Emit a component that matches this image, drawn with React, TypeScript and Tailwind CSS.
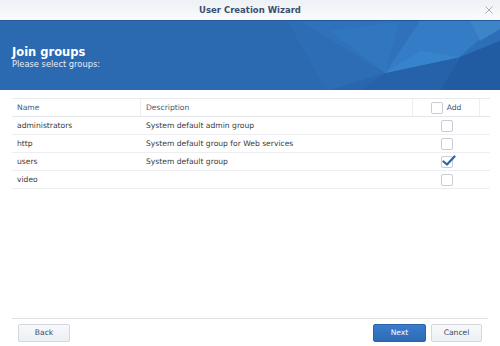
import React from "react";

const rows = [
  { name: "administrators", desc: "System default admin group", checked: false },
  { name: "http", desc: "System default group for Web services", checked: false },
  { name: "users", desc: "System default group", checked: true },
  { name: "video", desc: "", checked: false },
];

function Box({ checked }: { checked?: boolean }) {
  return (
    <div className="relative w-[12px] h-[12px] border border-[#c9cdd3] rounded-[2px] bg-white">
      {checked && (
        <svg className="absolute left-[0px] top-[-2px]" width="14" height="12" viewBox="0 0 14 12">
          <path d="M1.5 6.5 L5 9.5 L12.5 1.5" fill="none" stroke="#2b65ad" strokeWidth="2.2" strokeLinecap="round" strokeLinejoin="round" />
        </svg>
      )}
    </div>
  );
}

export default function App() {
  return (
    <div
      className="w-[500px] h-[346px] bg-white flex flex-col overflow-hidden"
      style={{ fontFamily: '"DejaVu Sans", Verdana, sans-serif' }}
    >
      <div className="h-[20px] flex items-center justify-center relative bg-gradient-to-b from-[#eef1f5] to-[#fafbfc]">
        <span className="text-[8.5px] font-bold text-[#3b4e6c]">User Creation Wizard</span>
        <svg className="absolute right-[7px] top-[6px]" width="8" height="8" viewBox="0 0 8 8">
          <path d="M0.5 0.5 L7.5 7.5 M7.5 0.5 L0.5 7.5" stroke="#a9aeb5" strokeWidth="1" />
        </svg>
      </div>
      <div className="h-[70px] relative bg-[#2b69b1] border-t border-[#235a9c] overflow-hidden">
        <svg className="absolute inset-0" width="500" height="70" viewBox="0 0 500 70" preserveAspectRatio="none">
          <polygon points="287,0 500,0 500,70 327,70" fill="#2d6db6" />
          <polygon points="300,0 420,0 385,52" fill="#2f71ba" />
          <polygon points="327,70 385,52 360,70" fill="#2a66ae" />
          <polygon points="385,52 460,36 440,70 360,70" fill="#2662aa" />
          <polygon points="330,10 385,52 400,0" fill="#3177c0" />
          <polygon points="420,0 500,0 460,36 385,52" fill="#347dc6" />
          <polygon points="385,52 420,30 460,36" fill="#3784cc" />
          <polygon points="460,36 500,0 500,20" fill="#2c6fb8" />
          <polygon points="460,36 500,20 500,70 440,70" fill="#215ca2" />
          <polygon points="470,0 500,0 500,8 480,20" fill="#3d84c9" />
        </svg>
        <div className="relative pl-[12px] pt-[24px] text-white">
          <div className="text-[11.5px] font-bold leading-[14px]">Join groups</div>
          <div className="text-[8.3px] leading-[11px] text-[#e8eef7]">Please select groups:</div>
        </div>
      </div>
      <div className="pt-[8px] pl-[12px] pr-[10px]">
        <div className="border-t border-[#e8eaed] text-[7.6px]">
          <div className="flex h-[18px] items-center border-b border-[#e3e6ea] text-[#3e5878]">
            <div className="w-[129px] h-full flex items-center pl-[5px] border-r border-[#eceef1]">Name</div>
            <div className="w-[272px] h-full flex items-center pl-[5px] border-r border-[#eceef1]">Description</div>
            <div className="w-[67px] h-full flex items-center justify-center gap-[4px] border-r border-[#eceef1]">
              <Box />
              <span>Add</span>
            </div>
            <div className="flex-1" />
          </div>
          {rows.map((r) => (
            <div key={r.name} className="flex h-[18px] items-center border-b border-[#eceef1] text-[#3a3a3a]">
              <div className="w-[129px] pl-[5px]">{r.name}</div>
              <div className="w-[272px] pl-[5px]">{r.desc}</div>
              <div className="w-[67px] flex justify-center">
                <Box checked={r.checked} />
              </div>
              <div className="flex-1" />
            </div>
          ))}
        </div>
      </div>
      <div className="flex-1" />
      <div className="mx-[12px] border-t border-[#dfe2e6] pt-[5px] pb-[4px] flex items-center text-[7.6px]">
        <button className="ml-[6px] w-[52px] h-[18px] rounded-[2px] border border-[#d3d8de] bg-gradient-to-b from-[#f8f9fb] to-[#eceff3] text-[#39465a]">
          Back
        </button>
        <div className="flex-1" />
        <button className="w-[53px] h-[18px] rounded-[2px] border border-[#2a62aa] bg-gradient-to-b from-[#3a7ccb] to-[#2e6ab8] text-white">
          Next
        </button>
        <button className="ml-[5px] mr-[6px] w-[51px] h-[18px] rounded-[2px] border border-[#d3d8de] bg-gradient-to-b from-[#f8f9fb] to-[#eceff3] text-[#39465a]">
          Cancel
        </button>
      </div>
    </div>
  );
}
